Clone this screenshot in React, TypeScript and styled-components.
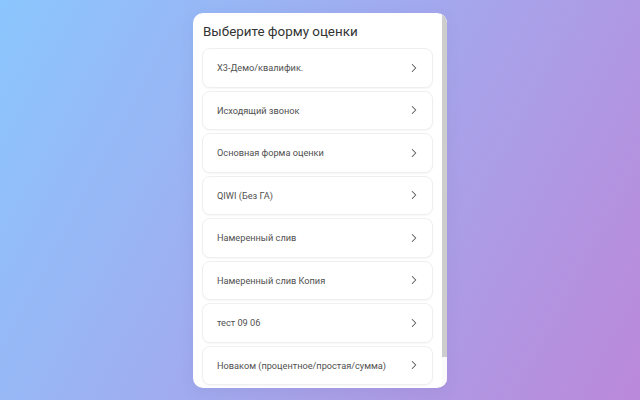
import styled, { createGlobalStyle } from "styled-components";
import { ChevronRight } from "lucide-react";

const GlobalStyle = createGlobalStyle`
  html, body {
    margin: 0;
    padding: 0;
    height: 100%;
  }
  body {
    font-family: Roboto, "Noto Sans", sans-serif;
  }
  #root {
    height: 100%;
  }
`

const Page = styled.div`
  height: 100vh;
  display: flex;
  align-items: center;
  justify-content: center;
  background: linear-gradient(118deg, #8bc6fd 0%, #a3a9ee 50%, #bb88da 100%);
`

const Card = styled.div`
  width: 254px;
  height: 375px;
  display: flex;
  background: #fff;
  border-radius: 10px;
  overflow: hidden;
  box-shadow: 0 4px 16px rgba(60, 60, 120, 0.08);
`

const Content = styled.div`
  flex: 1;
  min-width: 0;
  overflow: hidden;
  padding: 9.5px 9px 0 9px;
`

const ScrollTrack = styled.div`
  width: 5px;
  flex-shrink: 0;
  background: #fafafa;
`

const ScrollThumb = styled.div<{ $size: number }>`
  height: ${(p) => p.$size}px;
  background: #cdcdcd;
`

const Title = styled.h2`
  margin: 0 0 6px 1px;
  font-size: 13.4px;
  line-height: 20px;
  font-weight: 400;
  color: #333;
`

const List = styled.div`
  display: flex;
  flex-direction: column;
  gap: 3px;
`

const Item = styled.button`
  display: flex;
  align-items: center;
  justify-content: space-between;
  flex-shrink: 0;
  height: 39.5px;
  box-sizing: border-box;
  padding: 0 11px 0 14px;
  background: #fff;
  border: 1px solid #efefef;
  border-radius: 8px;
  box-shadow: 0 1px 2px rgba(0, 0, 0, 0.04);
  font-family: inherit;
  font-size: 9.2px;
  color: #505050;
  text-align: left;
  white-space: nowrap;
  cursor: pointer;
`

const Arrow = styled(ChevronRight)`
  flex-shrink: 0;
  color: #555;
`

const forms = [
  "Х3-Демо/квалифик.",
  "Исходящий звонок",
  "Основная форма оценки",
  "QIWI (Без ГА)",
  "Намеренный слив",
  "Намеренный слив Копия",
  "тест 09 06",
  "Новаком (процентное/простая/сумма)",
];

function App() {
  return (
    <>
      <GlobalStyle />
      <Page>
        <Card>
          <Content>
            <Title>Выберите форму оценки</Title>
            <List>
              {forms.map((name) => (
                <Item key={name}>
                  {name}
                  <Arrow size={14} strokeWidth={1.75} />
                </Item>
              ))}
            </List>
          </Content>
          <ScrollTrack>
            <ScrollThumb $size={344} />
          </ScrollTrack>
        </Card>
      </Page>
    </>
  );
}

export default App;
